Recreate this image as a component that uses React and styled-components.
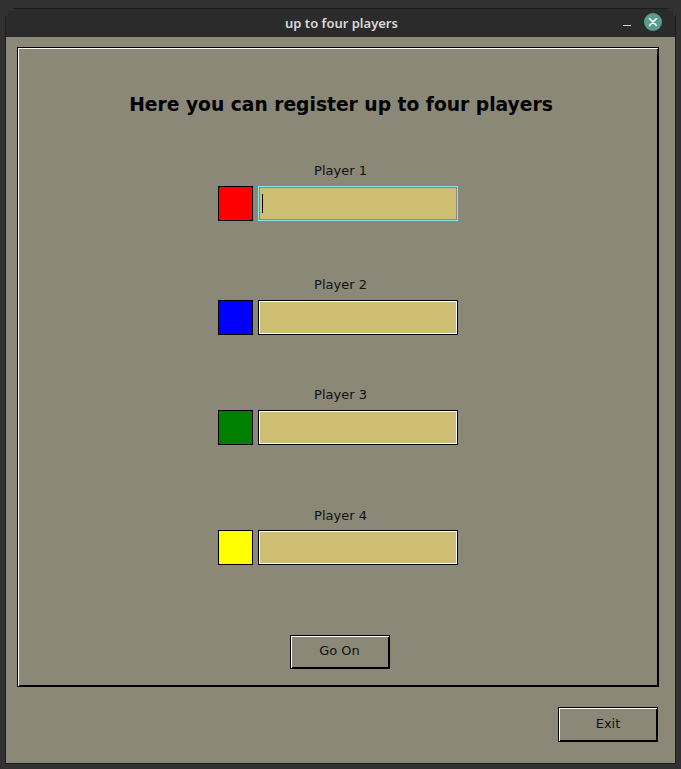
import React from "react";
import styled, { createGlobalStyle } from "styled-components";

const Global = createGlobalStyle`
  html, body { margin: 0; padding: 0; background: #313131; }
  body { font-family: "DejaVu Sans", sans-serif; }
  #root { width: 681px; height: 769px; }
`;

const Page = styled.div`
  width: 681px;
  height: 769px;
  padding: 8px 5px 5px 5px;
  box-sizing: border-box;
`;

const Window = styled.div`
  width: 671px;
  height: 756px;
  box-sizing: border-box;
  border: 1px solid #1c1c1c;
  border-radius: 9px 9px 0 0;
  overflow: hidden;
  display: flex;
  flex-direction: column;
  background: #8b8878;
`;

const TitleBar = styled.div`
  height: 28px;
  flex: none;
  background: #2b2b2b;
  position: relative;
  display: flex;
  align-items: center;
  justify-content: center;
`;

const Title = styled.span`
  font-family: "Noto Sans", "DejaVu Sans", sans-serif;
  font-size: 13px;
  font-weight: 600;
  color: #dadada;
  margin-left: 2px;
`;

const Controls = styled.div`
  position: absolute;
  right: 13px;
  top: 4px;
  display: flex;
  align-items: center;
  gap: 13px;
`;

const Minimize = styled.div`
  width: 8px;
  height: 1px;
  background: #d0d0d0;
  margin-top: 7px;
`;

const Close = styled.div`
  width: 18px;
  height: 18px;
  border-radius: 50%;
  background: #579c8e;
  display: flex;
  align-items: center;
  justify-content: center;
`;

const Body = styled.div`
  flex: 1;
  display: flex;
  flex-direction: column;
  padding: 10px 16px 0 11px;
`;

const Frame = styled.div`
  width: 642px;
  height: 640px;
  box-sizing: border-box;
  border: 1px solid #000;
  box-shadow: inset 1px 1px 0 #ffffff, inset -1px -1px 0 #000;
  display: flex;
  flex-direction: column;
  align-items: center;
`;

const Heading = styled.h1`
  margin: 45px 0 0 0;
  font-family: "DejaVu Sans", sans-serif;
  font-weight: bold;
  font-size: 18.7px;
  line-height: 24px;
  color: #000;
  margin-left: 6px;
`;

const PlayerGroup = styled.div`
  margin-top: ${(p) => p.$top}px;
  display: flex;
  flex-direction: column;
  align-items: center;
`;

const Label = styled.div`
  font-family: "DejaVu Sans", sans-serif;
  font-size: 13px;
  line-height: 16px;
  color: #111;
  margin-left: 5px;
  margin-bottom: ${(p) => p.$gap}px;
`;

const Row = styled.div`
  display: flex;
  gap: 5px;
`;

const Swatch = styled.div`
  width: 35px;
  height: 35px;
  box-sizing: border-box;
  border: 1px solid #000;
  background: ${(p) => p.$color};
`;

const Entry = styled.div`
  width: 200px;
  height: 35px;
  box-sizing: border-box;
  background: #cdbe73;
  border: 1px solid ${(p) => (p.$focused ? "#88e4ec" : "#000")};
  box-shadow: inset 0 0 0 1px ${(p) => (p.$focused ? "#7e8b8f" : "#fff")};
  display: flex;
  align-items: center;
  padding-left: 3px;
`;

const Caret = styled.span`
  width: 1px;
  height: 19px;
  background: #000;
`;

const Button = styled.div`
  width: 100px;
  height: ${(p) => p.$h}px;
  box-sizing: border-box;
  border: 1px solid #000;
  box-shadow: inset 1px 1px 0 #ffffff, inset -1px -1px 0 #000;
  display: flex;
  align-items: center;
  justify-content: center;
  padding-bottom: 3px;
  font-family: "DejaVu Sans", sans-serif;
  font-size: 13px;
  color: #111;
  margin-top: ${(p) => p.$top}px;
  margin-left: ${(p) => p.$left || 0}px;
`;

const Footer = styled.div`
  display: flex;
  justify-content: flex-end;
  padding-right: 1px;
`;

const players = [
  { name: "Player 1", color: "#ff0000", top: 46, gap: 7, focused: true },
  { name: "Player 2", color: "#0000ff", top: 56, gap: 7 },
  { name: "Player 3", color: "#008000", top: 52, gap: 7 },
  { name: "Player 4", color: "#ffff00", top: 63, gap: 6 },
];

export default function App() {
  return (
    <Page>
      <Global />
      <Window>
        <TitleBar>
          <Title>up to four players</Title>
          <Controls>
            <Minimize />
            <Close>
              <svg width="10" height="10" viewBox="0 0 10 10">
                <path d="M1.5 1.5 L8.5 8.5 M8.5 1.5 L1.5 8.5" stroke="#fff" strokeWidth="1.6" strokeLinecap="round" />
              </svg>
            </Close>
          </Controls>
        </TitleBar>
        <Body>
          <Frame>
            <Heading>Here you can register up to four players</Heading>
            {players.map((p) => (
              <PlayerGroup key={p.name} $top={p.top}>
                <Label $gap={p.gap}>{p.name}</Label>
                <Row>
                  <Swatch $color={p.color} />
                  <Entry $focused={p.focused}>{p.focused && <Caret />}</Entry>
                </Row>
              </PlayerGroup>
            ))}
            <Button $h={34} $top={70} $left={3}>Go On</Button>
          </Frame>
          <Footer>
            <Button $h={35} $top={20}>Exit</Button>
          </Footer>
        </Body>
      </Window>
    </Page>
  );
}
